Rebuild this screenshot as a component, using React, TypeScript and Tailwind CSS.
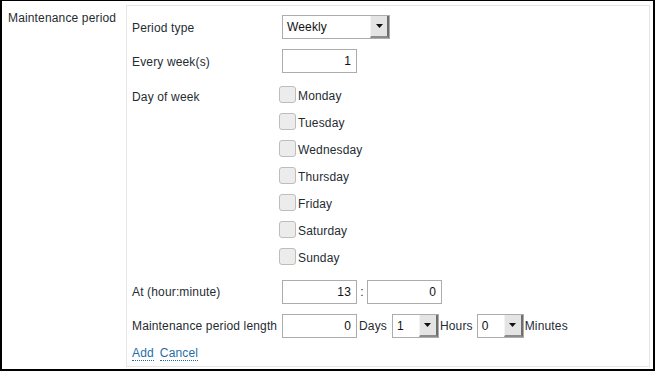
import React from "react";

const days = ["Monday", "Tuesday", "Wednesday", "Thursday", "Friday", "Saturday", "Sunday"];

const Select = ({ value, width }: { value: string; width: string }) => (
    <div className={`flex h-[24px] border border-[#acacac] bg-white ${width}`}>
        <div className="flex-1 flex items-center pl-[4px] text-[#111]">{value}</div>
        <div className="w-[19px] h-full flex items-center justify-center bg-[#e4e4e4] border-l border-l-[#f4f4f4] border-r-2 border-r-[#6e6e6e] border-b-2 border-b-[#8c8c8c]">
            <svg width="7" height="4" viewBox="0 0 7 4">
                <path d="M0 0H7L3.5 4Z" fill="#111" />
            </svg>
        </div>
    </div>
);

const NumInput = ({ value }: { value: string }) => (
    <div className="w-[75px] h-[24px] border border-[#acacac] bg-white flex items-center justify-end pr-[5px] text-[#111]">
        {value}
    </div>
);

export default function App() {
    return (
        <div className="w-[655px] h-[371px] flex bg-white border-t border-l-2 border-r-2 border-b-2 border-black font-['Liberation_Sans',Arial,sans-serif] text-[12px] leading-[14px] tracking-[0.15px] text-[#1f2c33]">
            <div className="w-[124px] shrink-0 pl-[6px] pt-[10px]">Maintenance period</div>

            <div className="mt-[4px] w-[524px] h-[362px] border border-[#e6e6e6] pl-[5px] pt-[9px] flex flex-col">
                <div className="flex items-center h-[24px]">
                    <div className="w-[150px] pt-[2px]">Period type</div>
                    <Select value="Weekly" width="w-[108px]" />
                </div>

                <div className="flex items-center h-[24px] mt-[10px]">
                    <div className="w-[150px] pt-[1px]">Every week(s)</div>
                    <NumInput value="1" />
                </div>

                <div className="flex mt-[13px]">
                    <div className="w-[147px] pt-[4px]">Day of week</div>
                    <div className="grid auto-rows-[27px] h-[178px]">
                        {days.map((day) => (
                            <div key={day} className="flex items-start">
                                <div className="w-[17px] h-[17px] rounded-[3px] bg-[#ececec] border border-[#bdbdbd] mr-[2px]"></div>
                                <span className="pt-[3px]">{day}</span>
                            </div>
                        ))}
                    </div>
                </div>

                <div className="flex items-center h-[24px] mt-[16px]">
                    <div className="w-[150px]">At (hour:minute)</div>
                    <NumInput value="13" />
                    <span className="w-[10px] text-center">:</span>
                    <NumInput value="0" />
                </div>

                <div className="flex items-center h-[24px] mt-[10px]">
                    <div className="w-[150px]">Maintenance period length</div>
                    <NumInput value="0" />
                    <span className="ml-[2px] mr-[5px]">Days</span>
                    <Select value="1" width="w-[47px]" />
                    <span className="ml-[1px] mr-[4px]">Hours</span>
                    <Select value="0" width="w-[47px]" />
                    <span className="ml-[1px]">Minutes</span>
                </div>

                <div className="flex gap-[6px] mt-[8px] text-[#1f6ea8]">
                    <span className="border-b border-dotted border-[#1f6ea8]">Add</span>
                    <span className="border-b border-dotted border-[#1f6ea8]">Cancel</span>
                </div>
            </div>
        </div>
    );
}
